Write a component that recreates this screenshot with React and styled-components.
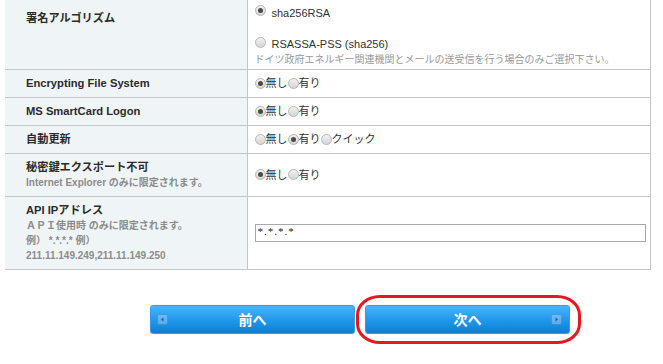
import React from 'react';
import styled, { createGlobalStyle } from 'styled-components';

const GlobalStyle = createGlobalStyle`
  body {
    margin: 0;
    background: #fff;
    font-family: "Liberation Sans", Arial, "Noto Sans CJK JP", sans-serif;
    color: #333;
  }
`;

const Page = styled.div`
  width: 663px;
  height: 364px;
  padding-left: 5px;
  box-sizing: border-box;
  overflow: hidden;
`;

const Table = styled.table`
  width: 646px;
  border-collapse: collapse;
  table-layout: fixed;
`;

const Row = styled.tr`
  height: ${(props) => props.h}px;
  border-bottom: 1px solid #c6c6c6;
`;

const Label = styled.th`
  width: 242px;
  box-sizing: border-box;
  padding: ${(props) => (props.top ? '11px' : '0')} 0 0 21px;
  vertical-align: ${(props) => (props.top ? 'top' : 'middle')};
  text-align: left;
  background: #eff4f7;
  border-right: 1px solid #c6c6c6;
`;

const LabelTitle = styled.div`
  font-size: 11.2px;
  line-height: 15px;
  font-weight: 700;
  color: #2b2b2b;
`;

const LabelNote = styled.div`
  font-size: 10px;
  line-height: 15px;
  font-weight: 700;
  color: #8c8c8c;
`;

const Cell = styled.td`
  padding: ${(props) => (props.top ? '5px 6px 0 7px' : '0 6px 0 7px')};
  vertical-align: ${(props) => (props.top ? 'top' : 'middle')};
  border-right: 1px solid #c6c6c6;
  font-size: 11px;
  color: #333;
`;

const OptionLine = styled.div`
  display: flex;
  align-items: center;
  line-height: 16px;
  margin-top: ${(props) => props.mt || 0}px;
`;

const Choice = styled.label`
  display: inline-flex;
  align-items: center;
  white-space: nowrap;
`;

const Dot = styled.span`
  display: inline-block;
  position: relative;
  width: 11px;
  height: 11px;
  box-sizing: border-box;
  border-radius: 50%;
  border: 1px solid #b8b8b8;
  background: linear-gradient(#f2f2f2, #d4d4d4);
  margin-right: ${(props) => props.gap || 0}px;
  margin-top: ${(props) => props.lift || 0}px;

  &::after {
    content: '';
    display: ${(props) => (props.checked ? 'block' : 'none')};
    position: absolute;
    left: 2px;
    top: 2px;
    width: 5px;
    height: 5px;
    border-radius: 50%;
    background: #4a4a4a;
  }
`;

const Note = styled.div`
  font-size: 10px;
  line-height: 15px;
  color: #999;
`;

const Field = styled.input`
  display: block;
  width: 391px;
  height: 18px;
  box-sizing: border-box;
  border: 1px solid #a9a9a9;
  padding: 0 2px 4px;
  font-family: "Liberation Serif", serif;
  font-size: 11px;
  letter-spacing: 1px;
  color: #222;
  line-height: 12px;
  outline: none;
`;

const ButtonRow = styled.div`
  display: flex;
  gap: 10px;
  margin-top: 35px;
  padding-left: 145px;
`;

const ButtonWrap = styled.div`
  position: relative;
`;

const NavButton = styled.button`
  position: relative;
  width: 205px;
  height: 29px;
  border: 1px solid #3b9be0;
  border-radius: 3px;
  background: linear-gradient(#4cb3fa, #2299ec 50%, #0b80d3);
  box-shadow: 0 0 1px rgba(0, 60, 120, 0.4);
  color: #fff;
  font-family: "Noto Sans CJK JP", sans-serif;
  font-size: 14px;
  font-weight: 700;
  line-height: 26px;
  padding: 0;
  cursor: pointer;
`;

const ArrowBox = styled.span`
  position: absolute;
  top: 8px;
  ${(props) => (props.right ? 'right: 7px;' : 'left: 6px;')}
  width: 11px;
  height: 11px;
  box-sizing: border-box;
  border-radius: 2px;
  background: rgba(255, 255, 255, 0.28);
  border: 1px solid rgba(20, 90, 160, 0.35);
  display: flex;
  align-items: center;
  justify-content: center;
`;

const Highlight = styled.div`
  position: absolute;
  top: -10px;
  bottom: -10px;
  left: -9px;
  right: -11px;
  border: 3.5px solid #e8161d;
  border-radius: 24px / 20px;
  pointer-events: none;
`;

const Arrow = ({ dir }) => (
  <svg width="5" height="5" viewBox="0 0 5 5">
    <path d={dir === 'right' ? 'M1.5 0.5 L4 2.5 L1.5 4.5 Z' : 'M3.5 0.5 L1 2.5 L3.5 4.5 Z'} fill="#1d5d9c" />
  </svg>
);

const Radio = ({ checked, children, gap, lift }) => (
  <Choice>
    <Dot checked={checked} gap={gap} lift={lift} />
    {children}
  </Choice>
);

const App = () => (
  <Page>
    <GlobalStyle />
    <Table>
      <tbody>
        <Row h={69}>
          <Label top>
            <LabelTitle>署名アルゴリズム</LabelTitle>
          </Label>
          <Cell top>
            <OptionLine>
              <Radio checked gap={6} lift={-6}>sha256RSA</Radio>
            </OptionLine>
            <OptionLine mt={15}>
              <Radio gap={6} lift={-4}>RSASSA-PSS (sha256)</Radio>
            </OptionLine>
            <Note>ドイツ政府エネルギー関連機関とメールの送受信を行う場合のみご選択下さい。</Note>
          </Cell>
        </Row>
        <Row h={28}>
          <Label>
            <LabelTitle>Encrypting File System</LabelTitle>
          </Label>
          <Cell>
            <OptionLine>
              <Radio checked>無し</Radio>
              <Radio>有り</Radio>
            </OptionLine>
          </Cell>
        </Row>
        <Row h={28}>
          <Label>
            <LabelTitle>MS SmartCard Logon</LabelTitle>
          </Label>
          <Cell>
            <OptionLine>
              <Radio checked>無し</Radio>
              <Radio>有り</Radio>
            </OptionLine>
          </Cell>
        </Row>
        <Row h={28}>
          <Label>
            <LabelTitle>自動更新</LabelTitle>
          </Label>
          <Cell>
            <OptionLine>
              <Radio>無し</Radio>
              <Radio checked>有り</Radio>
              <Radio>クイック</Radio>
            </OptionLine>
          </Cell>
        </Row>
        <Row h={43}>
          <Label>
            <LabelTitle>秘密鍵エクスポート不可</LabelTitle>
            <LabelNote>Internet Explorer のみに限定されます。</LabelNote>
          </Label>
          <Cell>
            <OptionLine>
              <Radio checked>無し</Radio>
              <Radio>有り</Radio>
            </OptionLine>
          </Cell>
        </Row>
        <Row h={73}>
          <Label>
            <LabelTitle>API IPアドレス</LabelTitle>
            <LabelNote>ＡＰＩ使用時 のみに限定されます。</LabelNote>
            <LabelNote>例） *.*.*.* 例）</LabelNote>
            <LabelNote>211.11.149.249,211.11.149.250</LabelNote>
          </Label>
          <Cell>
            <Field type="text" defaultValue="*.*.*.*" />
          </Cell>
        </Row>
      </tbody>
    </Table>
    <ButtonRow>
      <ButtonWrap>
        <NavButton>
          <ArrowBox>
            <Arrow dir="left" />
          </ArrowBox>
          前へ
        </NavButton>
      </ButtonWrap>
      <ButtonWrap>
        <NavButton>
          次へ
          <ArrowBox right>
            <Arrow dir="right" />
          </ArrowBox>
        </NavButton>
        <Highlight />
      </ButtonWrap>
    </ButtonRow>
  </Page>
);

export default App;
